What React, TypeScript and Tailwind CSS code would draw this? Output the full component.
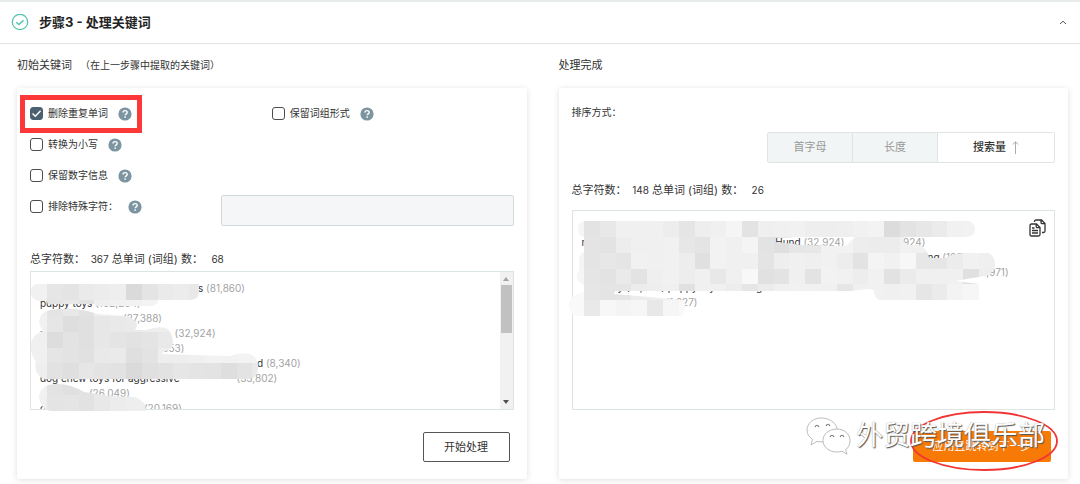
import React from "react";

const HelpIcon = () => (
  <svg viewBox="0 0 14 14" className="h-3.5 w-3.5 shrink-0" aria-hidden="true">
    <circle cx="7" cy="7" r="6.6" fill="#7d95a1" />
    <path d="M5 5.6C5 4.3 5.9 3.6 7.1 3.6s2.1.7 2.1 1.8c0 1.4-2 1.5-2 2.9" fill="none" stroke="#fff" strokeWidth="1.4" />
    <rect x="6.4" y="9.3" width="1.5" height="1.5" fill="#fff" />
  </svg>
);

function Option({ id, label, checked = false }: { id: string; label: string; checked?: boolean }) {
  return (
    <div className="flex h-[31px] items-center">
      <span className="relative flex h-[13px] w-[13px] shrink-0">
        <input
          id={id}
          type="checkbox"
          defaultChecked={checked}
          className="peer h-[13px] w-[13px] appearance-none rounded-[3px] border border-[#4c4c4c] bg-white checked:border-[#4b6170] checked:bg-[#4b6170]"
        />
        <svg viewBox="0 0 13 13" className="pointer-events-none absolute inset-0 hidden h-[13px] w-[13px] peer-checked:block" aria-hidden="true">
          <path d="M2.5 6.5 5.3 9.3 10.6 3.8" fill="none" stroke="#fff" strokeWidth="1.4" />
        </svg>
      </span>
      <label htmlFor={id} className="mr-2.5 ml-[5px] text-[10px] whitespace-nowrap">
        {label}
      </label>
      <HelpIcon />
    </div>
  );
}

const CELL = 15.8;

function Mosaic({ id, x, y, rows, shape, view, size }: {
  id: string; x: number; y: number; rows: string[]; shape: string; view: string; size: string;
}) {
  return (
    <svg viewBox={view} className={`pointer-events-none absolute top-0 left-0 overflow-visible ${size}`} aria-hidden="true">
      <clipPath id={id}>
        <path d={shape} clipRule="evenodd" />
      </clipPath>
      <g clipPath={`url(#${id})`} shapeRendering="crispEdges">
        {rows.map((row, j) =>
          row.split(" ").map((v, i) => (
            <rect key={`${i}-${j}`} x={x + i * CELL} y={y + j * CELL} width={CELL + 0.3} height={CELL + 0.3} fill={`#${v}${v}${v}`} />
          )),
        )}
      </g>
    </svg>
  );
}

const leftRows = [
  "f1 e6 e4 ea ec ee da e4 ea ec e8 e6 ea ee ee",
  "f0 e4 e8 e2 ef f1 f2 f3 f1 f4 f4 f4 f4 f4 f4",
  "f1 e6 de e0 e7 e9 ea ee ee ee ee ee ee ee ee",
  "f0 dd e3 e0 e7 e4 e2 e4 e9 e5 ee ee ee ee ee",
  "f0 e5 e3 e1 e9 ea df e3 ee ee f0 f2 f2 f3 f3",
  "ee e2 df e6 e3 e2 da e0 e2 e6 e4 e3 de e3 ea",
  "f1 e3 e0 e2 e9 ee ef ef ef ef ef ef ef ef ef",
  "f0 e4 e5 e2 e8 ec ee ee ef ef ef ef ef ef ef",
];

const leftShape =
  "M38 284H199V293Q198 300 190 300H158Q158 306 148 306H98L94 304H52Q47 306 47 301H39Q31 300 31 292T38 284Z" +
  "M50 310Q75 306 98 314L126 316Q137 319 137 326L135 330H146Q160 325 168 329Q175 338 172 348L160 354L230 356Q246 350 255 357Q262 368 254 378L246 379H43Q33 372 36 362Q28 350 32 340Q36 333 43 331Q36 322 42 314Q46 311 50 310Z" +
  "M48 385Q66 381 84 392L110 396 135 397Q146 401 146 411H50Q39 408 39 396Q40 388 48 385Z";

const rightRows = [
  "f5 e3 e8 f0 f0 f0 ed e5 ee f0 f5 e3 ef f0 f1 ee ee ef f1 f3 dc e3 e7 eb f1 f2 f6 fa",
  "f4 e4 e3 ed f0 f0 f1 e7 e4 f2 f0 f4 e3 df e6 e7 f1 f2 ed ec ec f1 f1 f3 f3 f3 f5 fa",
  "f4 e4 e7 e5 f1 f0 f1 ed e0 f2 f0 f0 e4 ee f0 ef f1 ed e3 f4 f1 f7 e7 e6 ec f1 ef fa",
  "f6 e5 e3 ea e3 ef f1 ed f0 e8 f0 f8 e1 e3 f0 e3 f2 f1 ed f1 e2 eb f0 f0 f0 e0 ee fa",
  "f9 e6 e4 e5 ec ee f0 e1 f0 f0 ed e6 ec f0 f1 f1 f0 e6 f0 f1 f0 f1 e6 eb f3 f6 fa fc",
  "f9 e9 f7 f4 f6 e8 f6 f9 f9 f9 f9 f9 f9 f9 f9 f9 f9 f9 f9 f9 f9 f9 f9 f9 f9 f9 f9 f9",
];

const rightShape =
  "M584 221H970Q975 224 975 230T966 237H905L902 240L908 245H919Q928 249 929 258L945 258Q955 253 966 253H989Q996 258 995 266Q993 274 984 276L955 281 979 284V300H880Q874 298 874 290L868 289 851 291H615L614 294 684 300Q687 308 682 316H576Q568 312 569 303Q570 295 584 292L583 285Q576 281 577 274Q580 270 579 260Q580 252 584 252V237Q578 236 578 229T584 221Z" +
  "M776 238L800 237H855L846 246 802 245 776 242Z";

function Count({ chars, words }: { chars: number; words: number }) {
  return (
    <p className="h-4 text-[11px] leading-4 whitespace-pre">
      总字符数：<span className="text-[10px]">{"  "}{chars}</span> 总单词 (词组) 数：<span className="text-[10px]">{"   "}{words}</span>
    </p>
  );
}

const Num = ({ children }: { children: React.ReactNode }) => <span className="text-[#a3a3a3]">{children}</span>;

const WeChat = () => (
  <svg viewBox="0 0 44 38" className="h-[38px] w-11 shrink-0 overflow-visible" aria-hidden="true">
    <g fill="#fff" stroke="#b4b4b4" strokeWidth="0.9">
      <path d="M15 1C7 1 1 6.500 1 13c0 4 2 7 5.500 9.200L5 28l6-3.600c2 .5 4 .6 6 .4C29 24 32 17 31 11 29 4.500 22 1 15 1Z" />
      <path d="M31 12c-8 0-14 5-14 11.500S23 35 31 35c2 0 3.500-.2 5-.7l5 3-1.300-4.600C42.500 30.500 44 27 44 23.500 44 17 38 12 31 12Z" />
    </g>
    <g fill="none" stroke="#777" strokeWidth="1.200">
      <path d="M9 10q2-3.500 4 0M20 9q2-3.500 4 0M24 20q2-3.500 4 0M34 20q2-3.500 4 0" />
    </g>
  </svg>
);

export default function App() {
  return (
    <main className="min-h-screen bg-white font-['Inter','Noto_Sans_CJK_SC',sans-serif] text-[#333]">
      <header className="flex h-11 items-center border-t-2 border-b border-t-[#e7ebeb] border-b-[#e2e4e4] px-[11px]">
        <svg viewBox="0 0 18 18" className="h-[18px] w-[18px]" aria-hidden="true">
          <circle cx="9" cy="8" r="7.700" fill="none" stroke="#53c3ac" strokeWidth="1.200" />
          <path d="m5.300 8.300 2.600 2.300 4.600-4.400" fill="none" stroke="#53c3ac" strokeWidth="1.500" />
        </svg>
        <h1 className="ml-2.5 text-[13px] font-bold text-[#222]">步骤3 - 处理关键词</h1>
        <button type="button" aria-label="收起" className="ml-auto flex h-3 w-3 items-center justify-center">
          <svg viewBox="0 0 8 5" className="h-[5px] w-2">
            <path d="m1 4 3-2.800L7 4" fill="none" stroke="#555" />
          </svg>
        </button>
      </header>

      <div className="grid grid-cols-2 gap-8 pr-3 pb-1 pl-[17px]">
        <section>
          <h2 className="flex h-11 items-center pb-0.5 text-[11px] whitespace-pre">
            初始关键词<span className="ml-2 text-[10px]">（在上一步骤中提取的关键词）</span>
          </h2>
          <div className="rounded-xs bg-white px-[13px] pt-2.5 pb-[17px] shadow-[0_1px_6px_rgba(0,0,0,0.13)]">
            <div className="flex">
              <div className="relative w-1/2">
                <Option id="dedupe" label="删除重复单词" checked />
                <div className="pointer-events-none absolute -top-[3px] -left-2.5 h-[38px] w-[122px] border-[5px] border-[#fc3838]" />
              </div>
              <Option id="phrase" label="保留词组形式" />
            </div>
            <Option id="lower" label="转换为小写" />
            <Option id="digits" label="保留数字信息" />
            <div className="flex items-start">
              <div className="w-[191px] shrink-0">
                <Option id="special" label="排除特殊字符：" />
              </div>
              <input
                type="text"
                disabled
                aria-label="排除特殊字符"
                className="mt-1 h-[31px] min-w-0 flex-1 rounded-xs border border-[#d3dade] bg-[#f4f6f8] px-2 text-[11px]"
              />
            </div>
            <div className="mt-[25px]">
              <Count chars={367} words={68} />
            </div>
            <div className="relative mt-1 flex h-[139px] border border-[#dde4e4]">
              <div className="min-w-0 flex-1 overflow-hidden pt-[9px] pl-[9px] text-[10px] leading-[15px] whitespace-pre">
                <p className="pl-[158px]">s <Num>(81,860)</Num></p>
                <p>puppy toys <Num>(102,204)</Num></p>
                <p className="pl-[83px]"><Num>(27,388)</Num></p>
                <p>rope<Num><span className="pl-[113px]">(32,924)</span></Num></p>
                <p className="pl-[110px]"><Num>(8,053)</Num></p>
                <p className="pl-[217px]">d <Num>(8,340)</Num></p>
                <p>dog chew toys for aggressive<Num><span className="pl-[57px]">(33,802)</span></Num></p>
                <p>dog toys<Num><span className="pl-2">(26,049)</span></Num></p>
                <p>outdoor<Num><span className="pl-[67px]">(20,169)</span></Num></p>
              </div>
              <div className="flex w-[13px] flex-col items-center justify-between bg-[#f1f1f1] py-[5px]" aria-hidden="true">
                <div className="flex flex-col items-center gap-1">
                  <svg viewBox="0 0 6 4" className="h-1 w-1.5"><path d="M0 4 3 0l3 4Z" fill="#a3a3a3" /></svg>
                  <div className="h-12 w-[11px] bg-[#c1c1c1]" />
                </div>
                <svg viewBox="0 0 6 4" className="h-1 w-1.5"><path d="M0 0l3 4 3-4Z" fill="#505050" /></svg>
              </div>
              <Mosaic id="mosaic-left" x={31.2} y={284.3} rows={leftRows} shape={leftShape} view="31 272 240 140" size="h-[140px] w-[240px]" />
            </div>
            <div className="mt-[22px] flex justify-end pr-1">
              <button type="button" className="h-[30px] w-[87px] rounded-xs border border-[#555] bg-white text-[11px]">
                开始处理
              </button>
            </div>
          </div>
        </section>

        <section>
          <h2 className="flex h-11 items-center pb-0.5 text-[11px]">处理完成</h2>
          <div className="rounded-xs bg-white px-[13px] pt-4 pb-[17px] shadow-[0_1px_6px_rgba(0,0,0,0.13)]">
            <p className="h-4 text-[10px] leading-4">排序方式：</p>
            <div className="mt-3 flex justify-end">
              <div className="flex h-[31px] rounded-xs border border-[#dfe5e5] text-[11px]">
                <button type="button" className="w-[85px] border-r border-[#dfe5e5] bg-[#f2f5f5] text-[#999]">首字母</button>
                <button type="button" className="w-[85px] border-r border-[#dfe5e5] bg-[#f2f5f5] text-[#999]">长度</button>
                <button type="button" className="flex w-[116px] items-center justify-center gap-1.5 bg-white font-medium">
                  搜索量
                  <svg viewBox="0 0 7 13" className="h-[13px] w-[7px]" aria-hidden="true">
                    <path d="M3.500 13V1M.7 3.500 3.500.8l2.800 2.700" fill="none" stroke="#a3adb3" />
                  </svg>
                </button>
              </div>
            </div>
            <div className="mt-[19px]">
              <Count chars={148} words={26} />
            </div>
            <div className="relative mt-3 h-[200px] border border-[#dde4e4]">
              <div className="h-full overflow-hidden pt-6 pl-[9px] text-[10px] leading-[15px] whitespace-pre">
                <p>r<span className="pl-[190px]">Hund</span> <Num>(32,924)<span className="pl-[40px]">(33,924)</span></Num></p>
                <p className="pl-[346px]">ng <Num>(105)</Num></p>
                <p className="pl-[391px]"><Num>(14,971)</Num></p>
                <p className="pl-[36px]">y (81,860) puppy toys<span className="pl-[36px]">g chew</span><span className="pl-[84px]">toy d</span></p>
                <p className="pl-[84px]"><Num>(1,627)</Num></p>
              </div>
              <Mosaic id="mosaic-right" x={568.2} y={221.2} rows={rightRows} shape={rightShape} view="573 211 430 110" size="h-[110px] w-[430px]" />
              <button type="button" aria-label="复制" className="absolute top-2 right-2 h-[18px] w-[17px]">
                <svg viewBox="0 0 17 18" className="h-[18px] w-[17px]" fill="none" stroke="#333" strokeWidth="1.300">
                  <path d="M5.500 3V2.500Q5.500 1 7 1h5.500L16 4.500V12q0 1.500-1.500 1.500H13M12 1v2.500q0 1.200 1.200 1.200H16" />
                  <path d="M1 6.500Q1 5 2.500 5H7.500L11 8.500V15.500Q11 17 9.500 17h-7Q1 17 1 15.500ZM7.200 5v2.500q0 1.200 1.200 1.200H11M3 9h2.500M3 11.500h6M3 14h6" />
                </svg>
              </button>
            </div>
            <div className="mt-[21px] flex justify-end pr-1">
              <div className="relative">
                <button type="button" className="h-[31px] w-[138px] rounded-xs bg-[#f77a07] text-[11px] text-white">
                  应用且跳转到下一步
                </button>
                <svg viewBox="0 0 150 60" className="pointer-events-none absolute -top-5 -left-1 h-[60px] w-[150px]" aria-hidden="true">
                  <ellipse cx="75" cy="30" rx="73" ry="29" fill="none" stroke="#f13434" strokeWidth="1.800" />
                </svg>
                <div className="pointer-events-none absolute -top-3.5 right-1.5 flex items-center gap-1.5">
                  <WeChat />
                  <span className="text-[27px] leading-[38px] whitespace-nowrap text-white [text-shadow:1px_1px_1px_#555,0_0_1px_#999]">
                    外贸跨境俱乐部
                  </span>
                </div>
              </div>
            </div>
          </div>
        </section>
      </div>
    </main>
  );
}
